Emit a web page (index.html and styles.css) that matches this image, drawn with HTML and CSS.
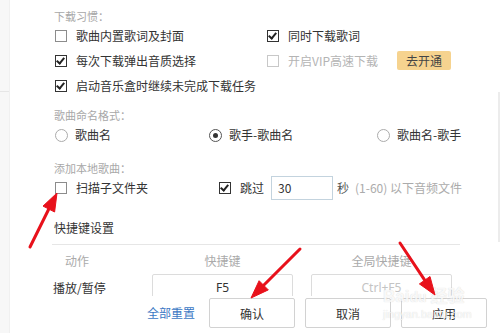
FILE: index.html
```html
<!DOCTYPE html>
<html lang="zh-CN">
<head>
  <meta charset="UTF-8" />
  <meta name="viewport" content="width=device-width, initial-scale=1" />
  <title>设置</title>
  <link rel="stylesheet" href="styles.css">
</head>
<body>
  <div class="window">
    <aside class="side"></aside>

    <main class="panel">
      <div class="label">下载习惯：</div>
      <div class="rows cols-download">
        <div class="opt"><span class="box"></span>歌曲内置歌词及封面</div>
        <div class="opt"><span class="box checked"></span>同时下载歌词</div>
        <div class="opt"><span class="box checked"></span>每次下载弹出音质选择</div>
        <div class="opt muted"><span class="box disabled"></span>开启VIP高速下载<button class="vip-btn">去开通</button></div>
        <div class="opt"><span class="box checked"></span>启动音乐盒时继续未完成下载任务</div>
      </div>

      <div class="label gap-a">歌曲命名格式：</div>
      <div class="rows cols-naming">
        <div class="opt radio-opt"><span class="radio"></span>歌曲名</div>
        <div class="opt radio-opt"><span class="radio on"></span>歌手-歌曲名</div>
        <div class="opt radio-opt"><span class="radio"></span>歌曲名-歌手</div>
      </div>

      <div class="label gap-b">添加本地歌曲：</div>
      <div class="rows cols-local">
        <div class="opt"><span class="box"></span>扫描子文件夹</div>
        <div class="opt skip">
          <span class="box checked"></span>跳过
          <span class="num-input">30</span>
          <span class="unit">秒</span>
          <span class="hint">(1-60) 以下音频文件</span>
        </div>
      </div>

      <div class="section-title">快捷键设置</div>
      <div class="keys">
        <div class="key-head first">动作</div>
        <div class="key-head">快捷键</div>
        <div class="key-head">全局快捷键</div>
        <div class="key-name">播放/暂停</div>
        <div class="key-box">F5</div>
        <div class="key-box global">Ctrl+F5</div>
      </div>
      <div class="edge"></div>
    </main>

    <div class="footer">
      <a class="reset" href="#">全部重置</a>
      <button class="btn">确认</button>
      <button class="btn">取消</button>
      <button class="btn">应用</button>
    </div>

    <div class="watermark">
      <span class="wm-big">Bai<span class="wm-paw">du</span>经验</span>
      <span class="wm-small">jingyan.baidu.com</span>
    </div>

    <svg class="marks" width="500" height="333" viewBox="0 0 500 333">
      <g fill="#e8111b" stroke="#e8111b">
        <line x1="30" y1="247" x2="48.8" y2="209" stroke-width="3" stroke-linecap="round" />
        <polygon points="57,193 54.6,212 43,206.1" stroke-width="1" stroke-linejoin="round" />
        <line x1="300" y1="249" x2="263.7" y2="285.3" stroke-width="3" stroke-linecap="round" />
        <polygon points="251,298 268.3,289.9 259.1,280.7" stroke-width="1" stroke-linejoin="round" />
        <line x1="400" y1="243" x2="424.7" y2="280.2" stroke-width="3" stroke-linecap="round" />
        <polygon points="435,295 419.4,283.9 430,276.5" stroke-width="1" stroke-linejoin="round" />
      </g>
    </svg>
  </div>
</body>
</html>
```

FILE: styles.css
```css
body {
  margin: 0;
  padding: 0;
  background: #fff;
  font-family: "Noto Sans CJK SC", "Noto Sans", sans-serif;
  color: #333;
}

.window {
  position: relative;
  width: 500px;
  height: 333px;
  display: flex;
  overflow: hidden;
  background: #fff;
}

.side {
  width: 9px;
  flex-shrink: 0;
  border-right: 1px solid #f0f0f0;
  background: linear-gradient(#f7f7f7 91px, #e6e6e6 91px, #e6e6e6 92px, #f7f7f7 92px);
}

.panel {
  position: relative;
  flex-grow: 1;
  padding: 9px 0 0 44px;
}

.label {
  font-size: 11px;
  line-height: 14px;
  height: 14px;
  color: #a8a8a8;
}
.gap-a { margin-top: 10px; }
.gap-b { margin-top: 13px; }

.rows {
  display: grid;
}
.cols-download {
  grid-template-columns: 212px auto;
  grid-auto-rows: 25px;
}
.cols-naming {
  grid-template-columns: 154px 168px auto;
  grid-auto-rows: 26px;
}
.cols-local {
  grid-template-columns: 164px auto;
  grid-auto-rows: 26px;
}

.opt {
  display: flex;
  align-items: center;
  font-size: 12px;
  line-height: 16px;
  color: #333;
  padding-left: 1px;
  white-space: nowrap;
}
.opt.muted {
  color: #b4b4b4;
}

.box {
  position: relative;
  width: 10px;
  height: 10px;
  border: 1px solid #8c8c8c;
  margin-right: 9px;
  flex-shrink: 0;
  background: #fff;
}
.box.checked {
  border: 1px solid #333;
}
.box.checked::after {
  content: "";
  position: absolute;
  left: 2px;
  top: 0px;
  width: 3px;
  height: 6px;
  border-right: 2px solid #222;
  border-bottom: 2px solid #222;
  transform: rotate(40deg);
}
.box.disabled {
  border-color: #c8c8c8;
}

.vip-btn {
  margin-left: 19px;
  width: 54px;
  height: 19px;
  border: none;
  border-radius: 2px;
  background: #f6d38f;
  color: #444;
  font-family: inherit;
  font-size: 12px;
  line-height: 19px;
  padding: 0;
}

.radio-opt .radio {
  position: relative;
  width: 11px;
  height: 11px;
  border: 1px solid #ababab;
  border-radius: 50%;
  margin-right: 7px;
  flex-shrink: 0;
}
.radio.on {
  border-color: #555;
}
.radio.on::after {
  content: "";
  position: absolute;
  left: 3px;
  top: 3px;
  width: 5px;
  height: 5px;
  border-radius: 50%;
  background: #333;
}

.num-input {
  width: 54px;
  height: 22px;
  margin-left: 7px;
  padding-left: 6px;
  border: 1px solid #c3d3de;
  line-height: 22px;
  font-size: 12px;
  color: #333;
}
.unit {
  margin-left: 4px;
  color: #555;
}
.hint {
  margin-left: 6px;
  color: #ababab;
}

.section-title {
  margin-top: 19px;
  width: 406px;
  margin-left: -2px;
  padding-left: 2px;
  font-size: 12px;
  line-height: 16px;
  padding-bottom: 8px;
  border-bottom: 1px solid #e6e6e6;
}

.keys {
  display: grid;
  grid-template-columns: 81px 141px 141px;
  grid-template-rows: 16px 28px;
  column-gap: 18px;
  row-gap: 5px;
  margin-top: 8px;
  margin-left: -1px;
  font-size: 12px;
}
.key-head {
  font-size: 12px;
  line-height: 16px;
  color: #aaa;
  text-align: center;
}
.key-head.first {
  text-align: left;
  padding-left: 12px;
}
.key-name {
  line-height: 28px;
  color: #333;
}
.key-box {
  border: 1px solid #dcdcdc;
  border-radius: 2px;
  height: 40px;
  line-height: 26px;
  text-align: center;
  color: #333;
  font-family: "Noto Sans", sans-serif;
}
.key-box.global {
  color: #c4c4c4;
}

.edge {
  position: absolute;
  right: 0;
  top: 92px;
  width: 2px;
  height: 150px;
  background: #ececec;
}

.footer {
  position: absolute;
  left: 10px;
  right: 0;
  bottom: 0;
  height: 35px;
  padding: 2px 13px 0 0;
  background: #fff;
  display: flex;
  justify-content: flex-end;
  align-items: flex-start;
  gap: 10px;
}
.reset {
  margin-right: 4px;
  line-height: 30px;
  font-size: 12px;
  color: #3b78c4;
  text-decoration: none;
}
.btn {
  width: 86px;
  height: 30px;
  border: 1px solid #d2d2d2;
  border-radius: 2px;
  background: #fff;
  color: #333;
  font-family: inherit;
  font-size: 12px;
  padding: 0;
}

.watermark {
  position: absolute;
  left: 383px;
  top: 287px;
  display: flex;
  flex-direction: column;
  pointer-events: none;
  color: rgba(255, 255, 255, 0.85);
  text-shadow: 0 0 1px rgba(0, 0, 0, 0.18);
}
.wm-big {
  font-family: "Liberation Sans", "Noto Sans CJK SC", sans-serif;
  font-size: 17px;
  font-weight: bold;
  line-height: 20px;
}
.wm-paw {
  font-size: 14px;
  margin-right: 4px;
}
.wm-small {
  font-family: "Liberation Sans", sans-serif;
  font-size: 11px;
  line-height: 14px;
}

.marks {
  position: absolute;
  left: 0;
  top: 0;
  pointer-events: none;
}
```
